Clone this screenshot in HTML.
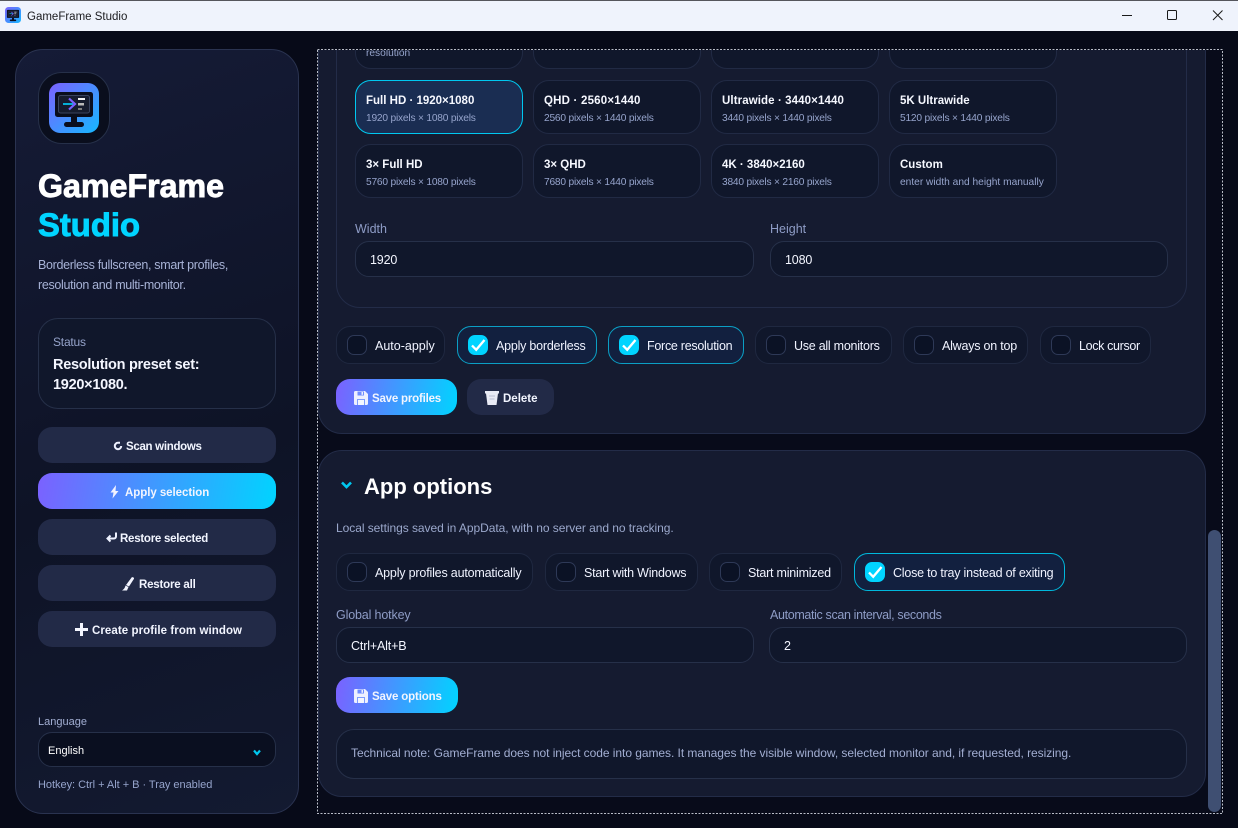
<!DOCTYPE html>
<html><head><meta charset="utf-8"><title>GameFrame Studio</title>
<style>
*{box-sizing:border-box}
html,body{margin:0;padding:0;width:1238px;height:828px;overflow:hidden;background:#070a18}
body{font-family:"Liberation Sans",sans-serif;color:#fff;position:relative}
.a{position:absolute}
.t{position:absolute;white-space:nowrap;line-height:20px;height:20px}
.w{font-size:11.5px;font-weight:700;color:#f2f5ff}
.btn{position:absolute;border-radius:14px;background:#222a47}
.grad{background:linear-gradient(100deg,#7b61ff,#00d4ff)}
.card{position:absolute;width:168px;height:54px;border-radius:16px;background:#10172b;border:1px solid #212a44}
.card b{position:absolute;left:10px;top:10px;font-size:11.5px;line-height:20px;color:#f6f8ff;white-space:nowrap}
.card i{position:absolute;left:10px;top:29px;font-style:normal;font-size:10.2px;line-height:18px;color:#96a4cc;white-space:nowrap;letter-spacing:-.2px}
.chip{position:absolute;height:38px;border-radius:14px;background:#10172b;border:1px solid #1f2840}
.chip.on{background:#12203f;border-color:#0b9fc4}
.chip u{position:absolute;left:10px;top:8px;width:20px;height:20px;border-radius:7px;background:#0b1225;border:1px solid #2e3957;text-decoration:none}
.chip.on u{background:#00d4ff;border-color:#00d4ff}
.chip span{position:absolute;left:38px;top:9px;line-height:20px;font-size:12.5px;color:#f0f3ff;white-space:nowrap;letter-spacing:-.22px}
.chip svg{position:absolute;left:0;top:0}
.input{position:absolute;height:36px;border-radius:14px;background:#10172b;border:1px solid #263049}
.input span{position:absolute;left:14px;top:8px;line-height:20px;font-size:12.5px;color:#f4f6ff;letter-spacing:-.15px}
.lab{color:#8e9cc6;font-size:12.5px}
</style></head><body>
<svg width="0" height="0" style="position:absolute"><defs>
<linearGradient id="lg" x1="0" y1="0" x2="1" y2="1"><stop offset="0" stop-color="#7b61ff"/><stop offset="1" stop-color="#16b8ff"/></linearGradient>
<symbol id="logo" viewBox="0 0 50 50">
<rect width="50" height="50" rx="11" fill="url(#lg)"/>
<rect x="6" y="9" width="38" height="25" rx="2.500" fill="#0a0e1d"/>
<rect x="9.500" y="12.500" width="31" height="17.500" rx="2" fill="#161c2e" stroke="#39445f"/>
<rect x="22" y="34" width="6" height="5" fill="#0a0e1d"/>
<rect x="15" y="39" width="20" height="5" rx="2.500" fill="#0a0e1d"/>
<path d="M14 21h10" stroke="#00d4ff" stroke-width="1.600"/>
<path d="M20 15.500l6 5.500-6 5.500" stroke="#7b61ff" stroke-width="2.200" fill="none"/>
<rect x="29" y="15" width="7" height="2" fill="#f2f2f2"/>
<rect x="29" y="20" width="6" height="2.500" fill="#b9b9b9"/>
<rect x="29" y="25" width="4" height="2" fill="#7d7d7d"/>
</symbol>
<symbol id="save" viewBox="0 0 14 14">
<path d="M1.500 0H11l3 3v9.500A1.500 1.500 0 0 1 12.500 14h-11A1.500 1.500 0 0 1 0 12.500v-11A1.500 1.500 0 0 1 1.500 0z" fill="#eef0ff"/>
<rect x="3.500" y="0.500" width="6.500" height="4" fill="#6f8cff"/><rect x="7.500" y="1" width="1.500" height="2.800" fill="#eef0ff"/>
<rect x="3" y="8" width="8" height="6" fill="#7d9cff"/><rect x="4" y="9" width="6" height="5" fill="#f4f6ff"/>
</symbol>
<symbol id="chk" viewBox="0 0 20 20"><path d="M4 10.500l4.200 4.300L16.500 5" fill="none" stroke="#fff" stroke-width="2.300"/></symbol>
</defs></svg>

<!-- title bar -->
<div class="a" style="left:0;top:0;width:1238px;height:31px;background:#eff3fc"></div>
<div class="a" style="left:0;top:0;width:1238px;height:1px;background:#55565c"></div>
<svg class="a" style="left:5px;top:7px" width="16" height="16"><use href="#logo" width="16" height="16"/></svg>
<div class="t" style="left:27px;top:7px;font-size:11.5px;color:#1b1b1f">GameFrame Studio</div>
<svg class="a" style="left:1115px;top:5px" width="120" height="20" fill="none" stroke="#1a1a1a" stroke-width="1">
<path d="M7 10.500h10"/><rect x="52.500" y="5.500" width="9" height="9" rx="1"/><path d="M98 5.500l9.500 9.500M107.500 5.500L98 15"/></svg>

<!-- sidebar -->
<div class="a" style="left:15px;top:49px;width:284px;height:765px;border-radius:28px;border:1px solid #2a3350;background:linear-gradient(160deg,#151b36 0%,#0e1326 55%,#131a31 100%)"></div>
<div class="a" style="left:38px;top:72px;width:72px;height:72px;border-radius:24px;background:#0a0e1d;border:1px solid #263049"></div>
<svg class="a" style="left:49px;top:83px" width="50" height="50"><use href="#logo" width="50" height="50"/></svg>
<div class="t" style="left:38px;top:170px;font-size:32.2px;font-weight:700;line-height:32px;height:32px;color:#fff;-webkit-text-stroke:.9px #fff">GameFrame</div>
<div class="t" style="left:38px;top:209px;font-size:32.8px;font-weight:700;line-height:32px;height:32px;color:#00d4ff;-webkit-text-stroke:.9px #00d4ff">Studio</div>
<div class="t" style="left:38px;top:255px;font-size:12.5px;color:#a7b2d6;letter-spacing:-.32px">Borderless fullscreen, smart profiles,</div>
<div class="t" style="left:38px;top:275px;font-size:12.5px;color:#a7b2d6;letter-spacing:-.32px">resolution and multi-monitor.</div>

<div class="a" style="left:38px;top:318px;width:238px;height:91px;border-radius:20px;background:#10172b;border:1px solid #263049"></div>
<div class="t" style="left:53px;top:332px;font-size:12px;color:#95a3ca;letter-spacing:-.2px">Status</div>
<div class="t" style="left:53px;top:355px;font-size:14.5px;font-weight:700;color:#f4f6ff;letter-spacing:-.27px">Resolution preset set:</div>
<div class="t" style="left:53px;top:375px;font-size:14.5px;font-weight:700;color:#f4f6ff;letter-spacing:-.27px">1920×1080.</div>

<div class="btn" style="left:38px;top:427px;width:238px;height:36px"></div>
<svg class="a" style="left:113px;top:441px" width="10" height="10" fill="none" stroke="#eef1ff" stroke-width="2"><path d="M8.200 5A3.200 3.200 0 1 1 5 1.800h2"/></svg>
<div class="t w" style="left:126px;top:437px;letter-spacing:-.3px">Scan windows</div>

<div class="btn grad" style="left:38px;top:473px;width:238px;height:36px"></div>
<svg class="a" style="left:110px;top:485px" width="9" height="14"><path d="M6 0L.5 7.500h3L2.500 13.500l6-7.500H5.500z" fill="#f2f2ff"/></svg>
<div class="t w" style="left:125px;top:483px;letter-spacing:-.05px">Apply selection</div>

<div class="btn" style="left:38px;top:519px;width:238px;height:36px"></div>
<svg class="a" style="left:106px;top:532px" width="12" height="11" fill="none" stroke="#eef1ff" stroke-width="2"><path d="M11 1.500h-1v3a2 2 0 0 1-2 2H1.500"/><path d="M4.500 3.500L1.500 6.500l3 3"/></svg>
<div class="t w" style="left:120px;top:529px;letter-spacing:-.25px">Restore selected</div>

<div class="btn" style="left:38px;top:565px;width:238px;height:36px"></div>
<svg class="a" style="left:122px;top:577px" width="12" height="14"><path d="M10 0l2.500 1L7 9.500l-3-1.500zM3.500 8.500l3 1.500L5 13.500H0c1.500-1 3-2.500 3.500-5z" fill="#f2f4ff"/></svg>
<div class="t w" style="left:139px;top:575px;letter-spacing:-.2px">Restore all</div>

<div class="btn" style="left:38px;top:611px;width:238px;height:36px"></div>
<svg class="a" style="left:75px;top:623px" width="13" height="13"><path d="M5 0h3v5h5v3H8v5H5V8H0V5h5z" fill="#f4f6ff"/></svg>
<div class="t w" style="left:92px;top:621px;letter-spacing:.07px">Create profile from window</div>

<div class="t" style="left:38px;top:712px;font-size:11px;color:#a2aed2">Language</div>
<div class="a" style="left:38px;top:732px;width:238px;height:35px;border-radius:14px;background:#0a0f20;border:1px solid #263049"></div>
<div class="t" style="left:48px;top:741px;font-size:11px;color:#fff">English</div>
<svg class="a" style="left:253px;top:749px" width="8" height="7" fill="none" stroke="#00c8f0" stroke-width="2.200"><path d="M1 1.500l3 3.500 3-3.500"/></svg>
<div class="t" style="left:38px;top:775px;font-size:11px;color:#96a4cc;letter-spacing:-.03px">Hotkey: Ctrl + Alt + B · Tray enabled</div>

<!-- main scroll -->
<div class="a" style="left:318px;top:50px;width:904px;height:763px;overflow:hidden;background:#080b1a">
 <div class="a" style="left:0;top:-40px;width:888px;height:424px;border-radius:24px;background:#151b30;border:1px solid #232c48"></div>
 <div class="a" style="left:18px;top:-40px;width:851px;height:298px;border-radius:24px;background:#151b30;border:1px solid #232c48"></div>
 <div class="a" style="left:0;top:400px;width:888px;height:347px;border-radius:24px;background:#151b30;border:1px solid #232c48"></div>
 <div class="a" style="left:890px;top:480px;width:13px;height:282px;border-radius:7px;background:#3f4f72"></div>
</div>

<div class="a" style="left:318px;top:50px;width:888px;height:380px;overflow:hidden">
 <div class="card" style="left:37px;top:-30px;height:49px"><i style="top:24px;left:10px;letter-spacing:0">resolution</i></div>
 <div class="card" style="left:215px;top:-30px;height:49px"></div>
 <div class="card" style="left:393px;top:-30px;height:49px"></div>
 <div class="card" style="left:571px;top:-30px;height:49px"></div>
</div>

<div class="card" style="left:355px;top:80px;background:#1a2d52;border-color:#00c8f0"><b>Full HD · 1920×1080</b><i>1920 pixels × 1080 pixels</i></div>
<div class="card" style="left:533px;top:80px"><b style="letter-spacing:.2px">QHD · 2560×1440</b><i>2560 pixels × 1440 pixels</i></div>
<div class="card" style="left:711px;top:80px"><b style="letter-spacing:.1px">Ultrawide · 3440×1440</b><i>3440 pixels × 1440 pixels</i></div>
<div class="card" style="left:889px;top:80px"><b>5K Ultrawide</b><i>5120 pixels × 1440 pixels</i></div>
<div class="card" style="left:355px;top:144px"><b>3× Full HD</b><i>5760 pixels × 1080 pixels</i></div>
<div class="card" style="left:533px;top:144px"><b>3× QHD</b><i>7680 pixels × 1440 pixels</i></div>
<div class="card" style="left:711px;top:144px"><b>4K · 3840×2160</b><i>3840 pixels × 2160 pixels</i></div>
<div class="card" style="left:889px;top:144px"><b>Custom</b><i style="letter-spacing:0">enter width and height manually</i></div>

<div class="t lab" style="left:355px;top:219px">Width</div>
<div class="t lab" style="left:770px;top:219px">Height</div>
<div class="input" style="left:355px;top:241px;width:399px"><span>1920</span></div>
<div class="input" style="left:770px;top:241px;width:398px"><span>1080</span></div>

<div class="chip" style="left:336px;top:326px;width:109px"><u></u><span style="letter-spacing:0">Auto-apply</span></div>
<div class="chip on" style="left:457px;top:326px;width:140px"><u></u><svg style="left:10px;top:8px" width="20" height="20"><use href="#chk"/></svg><span>Apply borderless</span></div>
<div class="chip on" style="left:608px;top:326px;width:136px"><u></u><svg style="left:10px;top:8px" width="20" height="20"><use href="#chk"/></svg><span style="letter-spacing:-.27px">Force resolution</span></div>
<div class="chip" style="left:755px;top:326px;width:137px"><u></u><span style="letter-spacing:-.25px">Use all monitors</span></div>
<div class="chip" style="left:903px;top:326px;width:125px"><u></u><span>Always on top</span></div>
<div class="chip" style="left:1040px;top:326px;width:111px"><u></u><span style="letter-spacing:-.35px">Lock cursor</span></div>

<div class="btn grad" style="left:336px;top:379px;width:121px;height:36px"></div>
<svg class="a" style="left:354px;top:391px" width="14" height="14"><use href="#save"/></svg>
<div class="t w" style="left:372px;top:389px;letter-spacing:-.2px">Save profiles</div>
<div class="btn" style="left:467px;top:379px;width:87px;height:36px"></div>
<svg class="a" style="left:485px;top:391px" width="14" height="14"><path d="M0 0h14v2.500h-1L11.500 14h-9L1 2.500H0z" fill="#e9ebf5"/><path d="M4 5h6M4.500 8h5" stroke="#b9bfd2"/></svg>
<div class="t w" style="left:503px;top:389px">Delete</div>

<svg class="a" style="left:341px;top:481px" width="11" height="9" fill="none" stroke="#00c8f0" stroke-width="2.600"><path d="M1 1.500l4.500 4.500L10 1.500"/></svg>
<div class="t" style="left:364px;top:475px;font-size:22px;font-weight:700;line-height:24px;height:24px;color:#fff">App options</div>
<div class="t" style="left:336px;top:518px;font-size:12px;color:#9ba8cc;letter-spacing:-.05px">Local settings saved in AppData, with no server and no tracking.</div>

<div class="chip" style="left:336px;top:553px;width:197px"><u></u><span style="letter-spacing:-.18px">Apply profiles automatically</span></div>
<div class="chip" style="left:545px;top:553px;width:153px"><u></u><span>Start with Windows</span></div>
<div class="chip" style="left:709px;top:553px;width:133px"><u></u><span>Start minimized</span></div>
<div class="chip on" style="left:854px;top:553px;width:211px;border-color:#00b8dc"><u></u><svg style="left:10px;top:8px" width="20" height="20"><use href="#chk"/></svg><span>Close to tray instead of exiting</span></div>

<div class="t lab" style="left:336px;top:605px;letter-spacing:-.15px">Global hotkey</div>
<div class="t lab" style="left:770px;top:605px;letter-spacing:-.35px">Automatic scan interval, seconds</div>
<div class="input" style="left:336px;top:627px;width:418px"><span>Ctrl+Alt+B</span></div>
<div class="input" style="left:769px;top:627px;width:418px"><span>2</span></div>

<div class="btn grad" style="left:336px;top:677px;width:122px;height:36px"></div>
<svg class="a" style="left:354px;top:689px" width="14" height="14"><use href="#save"/></svg>
<div class="t w" style="left:372px;top:687px;letter-spacing:-.15px">Save options</div>

<div class="a" style="left:336px;top:729px;width:851px;height:50px;border-radius:18px;background:#10172b;border:1px solid #263049"></div>
<div class="t" style="left:351px;top:743px;font-size:12px;color:#a2aed2;letter-spacing:-.05px">Technical note: GameFrame does not inject code into games. It manages the visible window, selected monitor and, if requested, resizing.</div>

<svg class="a" style="left:317px;top:49px" width="906" height="765" fill="none"><rect x=".5" y=".5" width="905" height="764" stroke="#b9bdc8" stroke-dasharray="2 1.500"/></svg>
</body></html>
